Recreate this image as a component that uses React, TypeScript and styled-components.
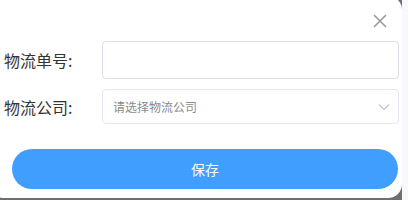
import styled, { createGlobalStyle } from 'styled-components';

const GlobalStyle = createGlobalStyle`
  html, body {
    margin: 0;
    padding: 0;
    background: #6f6f6f;
    font-family: "Noto Sans CJK SC", "Noto Sans", sans-serif;
  }
`;

export default function App() {
  return (
    <>
      <GlobalStyle />
      <Screen>
        <Dialog>
          <Header>
            <CloseButton aria-label="关闭">
              <svg width="14" height="14" viewBox="0 0 14 14">
                <path d="M1 1 L13 13 M13 1 L1 13" stroke="#9a9a9a" strokeWidth="1.6" fill="none" />
              </svg>
            </CloseButton>
          </Header>
          <FormRow $height={38}>
            <Label>物流单号:</Label>
            <Input />
          </FormRow>
          <FormRow $height={35} $top={10}>
            <Label>物流公司:</Label>
            <SelectBox>
              <Placeholder>请选择物流公司</Placeholder>
              <svg width="12" height="8" viewBox="0 0 12 8">
                <path d="M1 1.5 L6 6.5 L11 1.5" stroke="#c0c4cc" strokeWidth="1.2" fill="none" />
              </svg>
            </SelectBox>
          </FormRow>
          <SaveButton>保存</SaveButton>
        </Dialog>
        <SideStrip />
      </Screen>
    </>
  );
}

const Screen = styled.div`
  display: flex;
  width: 408px;
  height: 200px;
  overflow: hidden;
`;

const Dialog = styled.div`
  flex: 1;
  margin: -4px 0 2px -10px;
  padding: 0 3px 0 14px;
  background: #ffffff;
  border-radius: 14px;
  display: flex;
  flex-direction: column;
`;

const SideStrip = styled.div`
  width: 6px;
  background: #f6f8fb;
`;

const Header = styled.div`
  height: 45px;
  display: flex;
  justify-content: flex-end;
  align-items: flex-start;
  padding-right: 12px;
`;

const CloseButton = styled.button`
  margin-top: 18px;
  padding: 0;
  border: none;
  background: none;
  width: 14px;
  height: 14px;
  display: flex;
  cursor: pointer;
`;

const FormRow = styled.div<{ $height: number; $top?: number }>`
  display: flex;
  align-items: center;
  height: ${p => p.$height}px;
  margin-top: ${p => p.$top ?? 0}px;
`;

const Label = styled.div`
  width: 98px;
  font-size: 16px;
  color: #333333;
  line-height: 1;
`;

const Input = styled.input`
  flex: 1;
  height: 100%;
  box-sizing: border-box;
  border: 1px solid #dcdfe6;
  border-radius: 4px;
  outline: none;
  padding: 0 10px;
`;

const SelectBox = styled.div`
  flex: 1;
  height: 100%;
  box-sizing: border-box;
  border: 1px solid #e4e7ed;
  border-radius: 4px;
  display: flex;
  align-items: center;
  justify-content: space-between;
  padding: 0 8px 0 10px;
`;

const Placeholder = styled.span`
  font-size: 12px;
  color: #8a8a8a;
`;

const SaveButton = styled.button`
  margin: 25px 1px 0 8px;
  height: 40px;
  border: none;
  border-radius: 20px;
  background: #409eff;
  color: #ffffff;
  font-family: "Noto Sans CJK SC", "Noto Sans", sans-serif;
  font-size: 14px;
  cursor: pointer;
`;
